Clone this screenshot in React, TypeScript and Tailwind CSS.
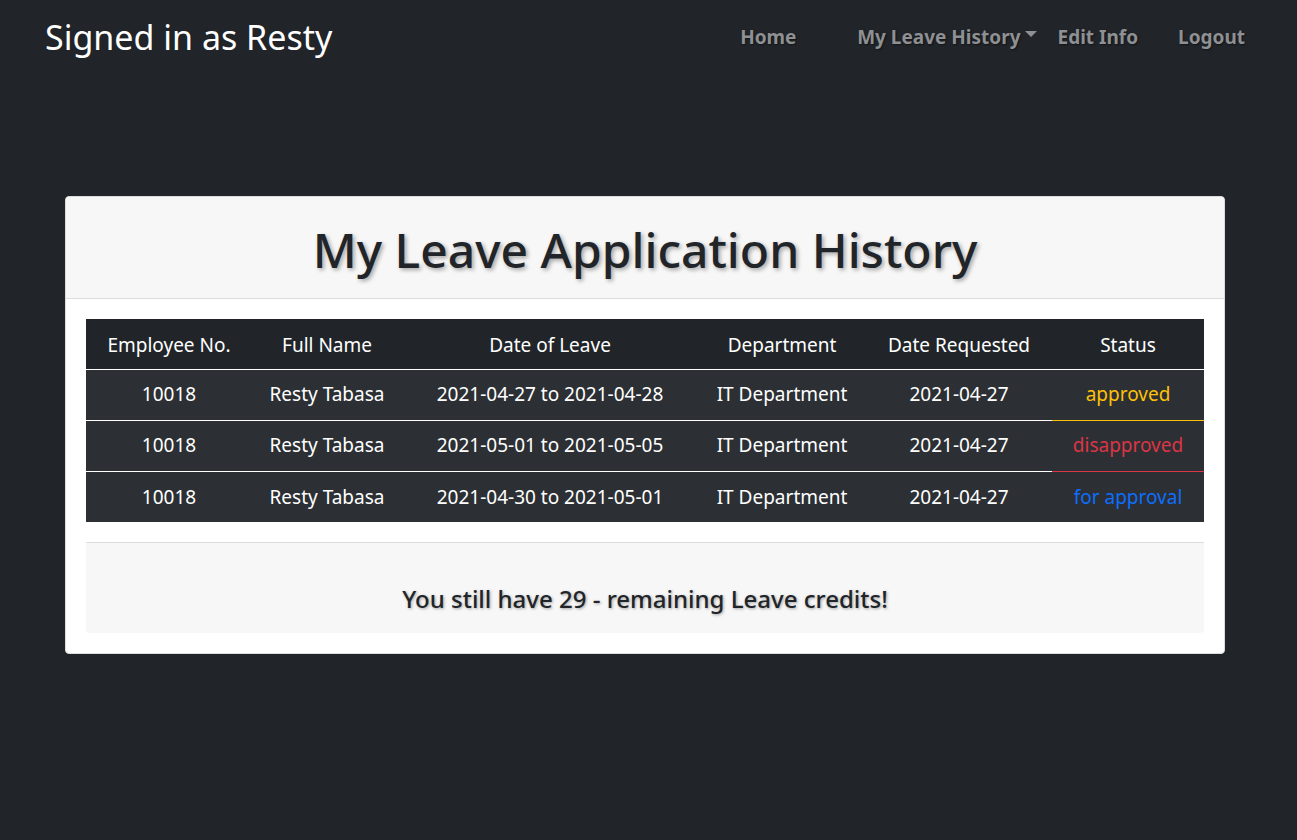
import React from "react";

const rows = [
  { no: "10018", name: "Resty Tabasa", leave: "2021-04-27 to 2021-04-28", dept: "IT Department", requested: "2021-04-27", status: "approved" },
  { no: "10018", name: "Resty Tabasa", leave: "2021-05-01 to 2021-05-05", dept: "IT Department", requested: "2021-04-27", status: "disapproved" },
  { no: "10018", name: "Resty Tabasa", leave: "2021-04-30 to 2021-05-01", dept: "IT Department", requested: "2021-04-27", status: "for approval" },
];

// status colour + the line under its cell
const statusStyle: Record<string, string> = {
  approved: "text-[#ffc107] border-b border-[#ffc107]",
  disapproved: "text-[#dc3545] border-b border-[#dc3545]",
  "for approval": "text-[#0d6efd]",
};

export default function App() {
  return (
    <div className="min-h-[840px] bg-[#212529] font-['Noto_Sans',sans-serif]">
      {/* Navbar */}
      <nav className="h-[78px] flex items-center justify-between pl-[45px] pr-[52px]">
        <span className="text-white text-[34px] leading-none -mt-1">Signed in as Resty</span>
        <div className="flex items-center text-[19px] font-bold text-[#8e9093] [text-shadow:1px_1px_2px_rgba(0,0,0,0.5)] -mt-1">
          <a className="w-[117px]">Home</a>
          <a className="flex items-center gap-1 mr-[21px]">
            My Leave History
            <span className="w-0 h-0 border-l-[6px] border-r-[6px] border-t-[6px] border-l-transparent border-r-transparent border-t-[#8e9093] mb-1.5" />
          </a>
          <a className="mr-[40px]">Edit Info</a>
          <a>Logout</a>
        </div>
      </nav>

      <main className="pt-[118px] pl-[65px]">
        <div className="w-[1160px] bg-white rounded-[4px] border border-[#dcdcdc]">
          <div className="h-[102px] bg-[#f7f7f7] border-b border-[#dcdcdc] rounded-t-[4px] flex items-center justify-center">
            <h1 className="text-[48px] font-medium text-[#212529] [text-shadow:2px_2px_4px_rgba(0,0,0,0.35)] leading-none mt-1">
              My Leave Application History
            </h1>
          </div>

          <div className="p-[20px]">
            <table className="w-full text-white text-[19px] text-center border-collapse">
              <thead>
                <tr className="bg-[#212529] h-[50px] border-b border-white">
                  <th className="font-normal w-[166px] pt-[2px]">Employee No.</th>
                  <th className="font-normal w-[150px] pt-[2px]">Full Name</th>
                  <th className="font-normal w-[296px] pt-[2px]">Date of Leave</th>
                  <th className="font-normal w-[168px] pt-[2px]">Department</th>
                  <th className="font-normal w-[186px] pt-[2px]">Date Requested</th>
                  <th className="font-normal pt-[2px]">Status</th>
                </tr>
              </thead>
              <tbody>
                {rows.map((r, i) => (
                  <tr key={i} className={`bg-[#2c3034] h-[51px] ${i < rows.length - 1 ? "border-b border-white" : ""}`}>
                    <td>{r.no}</td>
                    <td>{r.name}</td>
                    <td>{r.leave}</td>
                    <td>{r.dept}</td>
                    <td>{r.requested}</td>
                    <td className={statusStyle[r.status]}>{r.status}</td>
                  </tr>
                ))}
              </tbody>
            </table>

            <div className="mt-[20px] h-[91px] bg-[#f7f7f7] border-t border-[#dcdcdc] rounded-b-[4px] flex items-end justify-center pb-[22px]">
              <h4 className="text-[24px] font-medium text-[#212529] [text-shadow:1px_1px_3px_rgba(0,0,0,0.35)] leading-none">
                You still have 29 - remaining Leave credits!
              </h4>
            </div>
          </div>
        </div>
      </main>
    </div>
  );
}
